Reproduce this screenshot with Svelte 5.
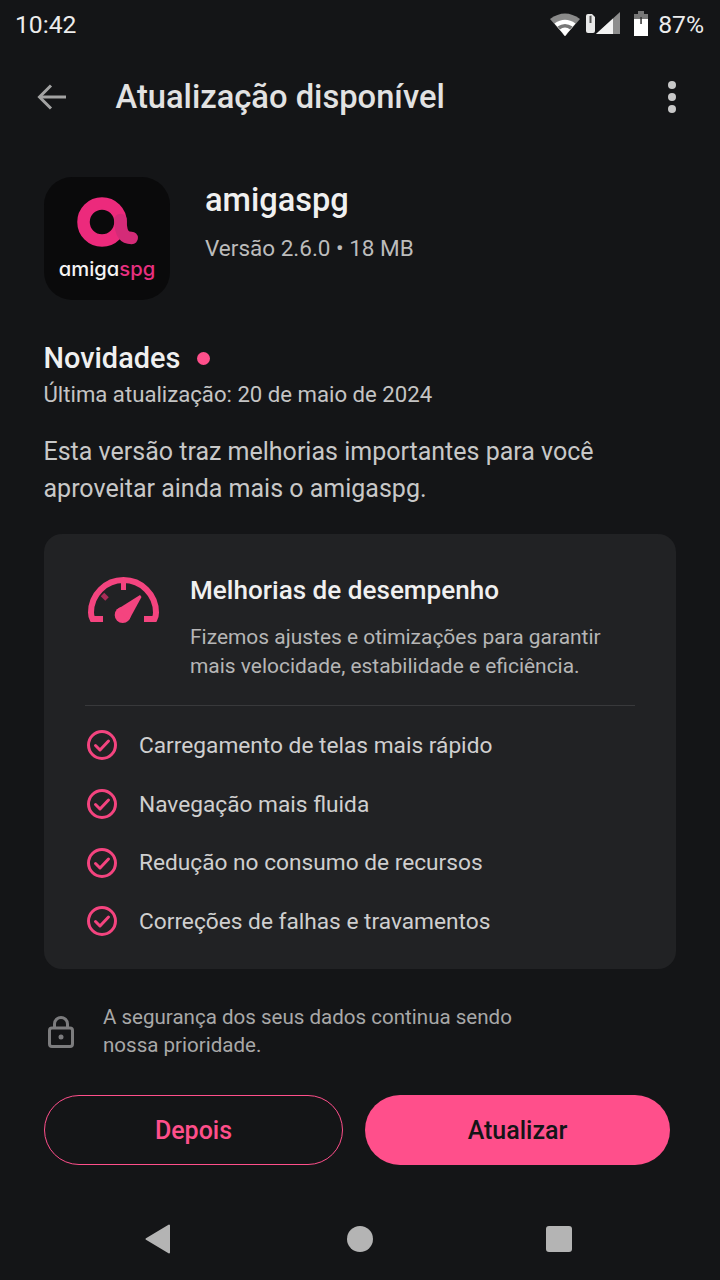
<script>
  const items = [
    'Carregamento de telas mais rápido',
    'Navegação mais fluida',
    'Redução no consumo de recursos',
    'Correções de falhas e travamentos'
  ]
</script>

<div class="screen">
  <div class="status">
    <span class="time">10:42</span>
    <div class="status-right">
      <svg class="wifi" width="32" height="26" viewBox="0 0 32 26">
        <path d="M16 25 L1 8 Q16 -3 31 8 Z" fill="#8a8a8a"/>
        <path d="M16 25 L5.500 12.500 Q16 5 26.500 12.500 Z" fill="#fff"/>
        <path d="M16 25 L8.500 15.500 Q16 10.500 23.500 15.500 Z" fill="#777"/>
        <path d="M16 25 L10.800 18.500 Q16 14.500 21.200 18.500 Z" fill="#fff"/>
      </svg>
      <svg class="signal" width="36" height="24" viewBox="0 0 36 24">
        <path d="M0 4 Q0 2 2 2 L6 2 L9 5 L9 19 Q9 21 7 21 L2 21 Q0 21 0 19 Z" fill="#e8e8e8"/>
        <path d="M5.500 3.500 L5.500 11 L3.500 11 L3.500 4 Z" fill="#555"/>
        <path d="M10 22 L34 0 L34 22 Z" fill="#8d8d8d"/>
        <path d="M10 22 L27 6.500 L27 22 Z" fill="#f2f2f2"/>
      </svg>
      <svg class="battery" width="16" height="26" viewBox="0 0 16 26">
        <path d="M5 0 H11 V3 H15 V25 H1 V3 H5 Z" fill="#fff"/>
        <path d="M5 0 H11 V3 H15 V8 H1 V3 H5 Z" fill="#777"/>
        <rect x="7.300" y="6" width="1.500" height="7" fill="#333"/>
      </svg>
      <span class="pct">87%</span>
    </div>
  </div>

  <div class="appbar">
    <svg class="back" width="32" height="32" viewBox="0 0 32 32" fill="none" stroke="#a3a3a3" stroke-width="3">
      <path d="M30 16 H4"/>
      <path d="M15 4.500 L3.500 16 L15 27.500"/>
    </svg>
    <h1>Atualização disponível</h1>
    <div class="dots"><i></i><i></i><i></i></div>
  </div>

  <div class="app-head">
    <div class="app-icon">
      <svg width="68" height="52" viewBox="0 0 68 52" fill="none">
        <circle cx="29" cy="26" r="18.500" stroke="#ec2a7c" stroke-width="12.500"/>
        <path d="M47.500 24 C47.500 36 50 42 58.700 42" stroke="#d42b78" stroke-width="12.500" stroke-linecap="round"/>
      </svg>
      <div class="logo-text">amiga<span>spg</span></div>
    </div>
    <div class="app-info">
      <div class="app-name">amigaspg</div>
      <div class="app-ver">Versão 2.6.0 • 18 MB</div>
    </div>
  </div>

  <div class="news">
    <h2>Novidades <i class="dot"></i></h2>
    <p class="updated">Última atualização: 20 de maio de 2024</p>
    <p class="desc">Esta versão traz melhorias importantes para você aproveitar ainda mais o amigaspg.</p>
  </div>

  <div class="card">
    <div class="card-top">
      <svg class="gauge" width="76" height="50" viewBox="0 0 76 50" fill="none">
        <path d="M17 44 H6.500 C5.500 42 5 40 5 37.500 A32.500 32.500 0 0 1 70 37.500 C70 40 69.500 42 68.500 44 H58" stroke="#f4447f" stroke-width="6"/>
        <path d="M37.500 3 V15" stroke="#f4447f" stroke-width="5"/>
        <path d="M16.500 19.500 L21 24" stroke="#a82c58" stroke-width="5"/>
        <circle cx="36.700" cy="40" r="8" fill="#f4447f"/>
        <path d="M31 34.500 L54 20 L55.500 22 L43 45 Z" fill="#f4447f"/>
      </svg>
      <div>
        <h3>Melhorias de desempenho</h3>
        <p>Fizemos ajustes e otimizações para garantir mais velocidade, estabilidade e eficiência.</p>
      </div>
    </div>
    <ul>
      {#each items as item}
        <li>
          <svg width="30" height="30" viewBox="0 0 30 30" fill="none" stroke="#f4447f" stroke-width="3">
            <circle cx="15" cy="15" r="13.500"/>
            <path d="M8.500 15.500 L13 20 L21.500 11" stroke-linecap="round" stroke-linejoin="round"/>
          </svg>
          {item}
        </li>
      {/each}
    </ul>
  </div>

  <div class="secure">
    <svg width="26" height="32" viewBox="0 0 26 32" fill="none" stroke="#7c7c7e" stroke-width="3">
      <rect x="1.500" y="12" width="23" height="18.500" rx="2.500"/>
      <path d="M6.500 12 V8 A6.500 6.500 0 0 1 19.500 8 V12"/>
      <circle cx="13" cy="21" r="2.500" fill="#7c7c7e" stroke="none"/>
    </svg>
    <p>A segurança dos seus dados continua sendo nossa prioridade.</p>
  </div>

  <div class="actions">
    <button class="later">Depois</button>
    <button class="update">Atualizar</button>
  </div>

  <div class="nav">
    <svg width="26" height="30" viewBox="0 0 26 30"><path d="M24 1.500 V28.500 L1.500 15 Z" fill="#b4b4b4" stroke="#b4b4b4" stroke-width="2" stroke-linejoin="round"/></svg>
    <span class="circle"></span>
    <span class="square"></span>
  </div>
</div>

<style>
  :global(body) {
    margin: 0;
    background: #141517;
  }

  .screen {
    width: 720px;
    height: 1280px;
    background: #141517;
    color: #e6e6e6;
    font-family: Roboto, sans-serif;
    display: flex;
    flex-direction: column;
    overflow: hidden;
  }

  .status {
    height: 48px;
    display: flex;
    align-items: center;
    justify-content: space-between;
    padding: 0 16px 0 15px;
    font-size: 24.700px;
    color: #ececec;
  }

  .status-right {
    display: flex;
    align-items: center;
  }

  .wifi { margin-right: 5px; }
  .signal { margin-right: 11px; }
  .battery { margin-right: 9px; }

  .appbar {
    height: 98px;
    display: flex;
    align-items: center;
    padding: 0 44px 0 36px;
  }

  .back { margin-right: 47.500px; }

  h1 {
    flex: 1;
    margin: 0;
    font-size: 32.700px;
    font-weight: 500;
    color: #e2e2e2;
  }

  .dots {
    display: flex;
    flex-direction: column;
    gap: 4px;
  }

  .dots i {
    width: 8px;
    height: 8px;
    border-radius: 50%;
    background: #c8c8c8;
  }

  .app-head {
    display: flex;
    margin: 31px 0 0 44px;
  }

  .app-icon {
    width: 126px;
    height: 123px;
    border-radius: 28px;
    background: #0a0a0b;
    display: flex;
    flex-direction: column;
    align-items: center;
    padding-top: 19px;
    box-sizing: border-box;
  }

  .logo-text {
    font-family: Inter, sans-serif;
    font-feature-settings: "cv11";
    font-size: 20.200px;
    font-weight: 500;
    line-height: 26px;
    margin-top: 8px;
    color: #f4f4f4;
  }

  .logo-text span { color: #e83080; }

  .app-info { margin-left: 35px; }

  .app-name {
    font-size: 32.600px;
    font-weight: 500;
    line-height: 36px;
    margin-top: 5px;
    color: #f0f0f0;
  }

  .app-ver {
    font-size: 22.500px;
    line-height: 28px;
    margin-top: 16px;
    color: #bcbcbc;
  }

  .news { margin: 42px 44px 0 43.500px; }

  h2 {
    margin: 0;
    font-size: 28.900px;
    font-weight: 500;
    line-height: 32px;
    color: #f0f0f0;
    display: flex;
    align-items: center;
    gap: 17px;
  }

  .dot {
    width: 13px;
    height: 13px;
    border-radius: 50%;
    background: #ff4f8b;
  }

  .updated {
    margin: 5px 0 0;
    font-size: 22.170px;
    line-height: 30px;
    color: #c4c4c4;
  }

  .desc {
    margin: 24px 0 0;
    font-size: 25px;
    line-height: 37px;
    color: #c8c8c8;
  }

  .card {
    margin: 27px 44px 0;
    height: 435px;
    box-sizing: border-box;
    padding: 39px 41px 0;
    background: #212224;
    border-radius: 18px;
  }

  .card-top {
    display: flex;
    align-items: flex-start;
    height: 132px;
    border-bottom: 1px solid #38393b;
  }

  .gauge {
    margin: 2px 28px 0 1px;
    flex-shrink: 0;
  }

  h3 {
    margin: 0;
    font-size: 26.100px;
    font-weight: 500;
    line-height: 34px;
    color: #f0f0f0;
  }

  .card-top p {
    margin: 16px 0 0;
    font-size: 20.950px;
    line-height: 28.500px;
    color: #b6b6b6;
  }

  ul {
    list-style: none;
    margin: 0;
    padding: 10px 0 0 2px;
  }

  li {
    height: 58.700px;
    display: flex;
    align-items: center;
    gap: 22px;
    font-size: 22.700px;
    color: #cfcfcf;
  }

  .secure {
    display: flex;
    margin: 33px 0 0 48px;
    height: 60px;
    align-items: center;
  }

  .secure p {
    margin: -2px 0 0 29px;
    width: 440px;
    font-size: 20.550px;
    line-height: 28px;
    color: #a8a8a8;
  }

  .actions {
    display: flex;
    gap: 22px;
    margin: 33px 0 0 44px;
  }

  button {
    height: 70px;
    border-radius: 35px;
    font-family: Roboto, sans-serif;
    font-size: 25px;
    font-weight: 500;
  }

  .later {
    width: 299px;
    background: transparent;
    border: 1.500px solid #ff4f8b;
    color: #ff4f8b;
  }

  .update {
    width: 305px;
    background: #ff4f8b;
    border: 0;
    color: #141517;
  }

  .nav {
    display: flex;
    align-items: center;
    margin-top: 47px;
    height: 54px;
    padding-left: 145px;
  }

  .circle {
    width: 26px;
    height: 26px;
    border-radius: 50%;
    background: #b4b4b4;
    margin-left: 176px;
  }

  .square {
    width: 26px;
    height: 26px;
    border-radius: 3px;
    background: #b4b4b4;
    margin-left: 173px;
  }
</style>
